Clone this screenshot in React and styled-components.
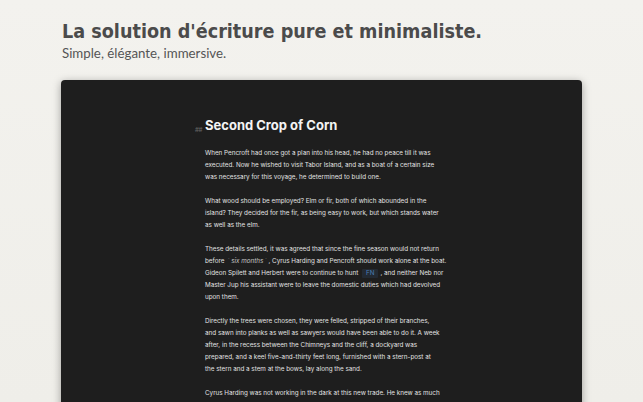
import React from "react";
import styled, { createGlobalStyle } from "styled-components";

const GlobalStyle = createGlobalStyle`
  html, body {
    margin: 0;
    padding: 0;
    background: #f1f0ec;
    overflow: hidden;
  }
`;

const Page = styled.div`
  width: 643px;
  height: 402px;
  padding: 18px 0 0 61px;
  box-sizing: border-box;
  overflow: hidden;
  background: linear-gradient(180deg, #f3f2ee 0%, #efeee9 100%);
`;

const Title = styled.h1`
  margin: 0 0 0 1px;
  font-family: "DejaVu Sans Condensed", "DejaVu Sans", sans-serif;
  font-stretch: condensed;
  font-weight: 700;
  font-size: 19.6px;
  line-height: 28px;
  color: #4b4b4b;
`;

const Subtitle = styled.p`
  margin: -2px 0 0 1px;
  font-family: Lato, sans-serif;
  font-weight: 400;
  font-size: 13.3px;
  line-height: 18px;
  color: #555;
`;

const Window = styled.div`
  margin-top: 18px;
  width: 521px;
  height: 340px;
  background: #1e1e1e;
  border-radius: 4px;
  box-shadow: 0 2px 8px rgba(0, 0, 0, 0.35);
  padding: 37px 0 0 144px;
  box-sizing: border-box;
  font-family: Inter, sans-serif;
`;

const Heading = styled.h2`
  position: relative;
  margin: 0 0 14px;
  font-size: 13px;
  line-height: 16px;
  font-weight: 700;
  color: #f4f4f4;
`;

const Hash = styled.span`
  position: absolute;
  left: -10px;
  top: 5px;
  font-size: 6px;
  font-weight: 700;
  letter-spacing: -0.5px;
  color: #555;
`;

const Paragraph = styled.p`
  margin: 0 0 12px;
  font-size: 6.3px;
  line-height: 12px;
  color: #e2e2e2;
  white-space: nowrap;
`;

const Line = styled.span`
  display: block;
`;

const Code = styled.span`
  color: #c4c4c4;
  font-style: italic;
  &::before,
  &::after {
    content: "\`";
    font-style: normal;
    color: #666;
    margin: 0 1.5px;
  }
`;

const Tag = styled.span`
  display: inline-block;
  padding: 0 4px;
  margin: 0 2px;
  line-height: 9px;
  background: #232a33;
  color: #4a7fb8;
  border-radius: 1px;
`;

const paragraphs = [
  [
    "When Pencroft had once got a plan into his head, he had no peace till it was",
    "executed. Now he wished to visit Tabor Island, and as a boat of a certain size",
    "was necessary for this voyage, he determined to build one.",
  ],
  [
    "What wood should be employed? Elm or fir, both of which abounded in the",
    "island? They decided for the fir, as being easy to work, but which stands water",
    "as well as the elm.",
  ],
];

const App = () => (
  <>
    <GlobalStyle />
    <Page>
      <Title>La solution d'écriture pure et minimaliste.</Title>
      <Subtitle>Simple, élégante, immersive.</Subtitle>
      <Window>
        <Heading>
          <Hash>##</Hash>
          Second Crop of Corn
        </Heading>
        {paragraphs.map((lines, i) => (
          <Paragraph key={i}>
            {lines.map((l) => (
              <Line key={l}>{l}</Line>
            ))}
          </Paragraph>
        ))}
        <Paragraph>
          <Line>
            These details settled, it was agreed that since the fine season would not return
          </Line>
          <Line>
            before <Code>six months</Code>, Cyrus Harding and Pencroft should work alone at the boat.
          </Line>
          <Line>
            Gideon Spilett and Herbert were to continue to hunt <Tag>FN</Tag>, and neither Neb nor
          </Line>
          <Line>
            Master Jup his assistant were to leave the domestic duties which had devolved
          </Line>
          <Line>upon them.</Line>
        </Paragraph>
        <Paragraph>
          <Line>
            Directly the trees were chosen, they were felled, stripped of their branches,
          </Line>
          <Line>
            and sawn into planks as well as sawyers would have been able to do it. A week
          </Line>
          <Line>
            after, in the recess between the Chimneys and the cliff, a dockyard was
          </Line>
          <Line>
            prepared, and a keel five-and-thirty feet long, furnished with a stern-post at
          </Line>
          <Line>the stern and a stem at the bows, lay along the sand.</Line>
        </Paragraph>
        <Paragraph>
          <Line>
            Cyrus Harding was not working in the dark at this new trade. He knew as much
          </Line>
        </Paragraph>
      </Window>
    </Page>
  </>
);

export default App;
